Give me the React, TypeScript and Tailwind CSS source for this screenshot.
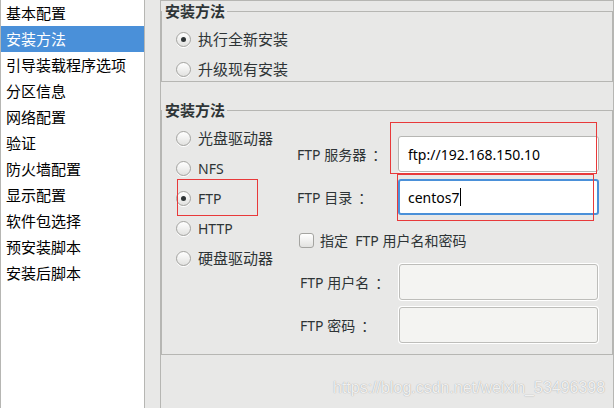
import React from "react";

const items = [
  "基本配置",
  "安装方法",
  "引导装载程序选项",
  "分区信息",
  "网络配置",
  "验证",
  "防火墙配置",
  "显示配置",
  "软件包选择",
  "预安装脚本",
  "安装后脚本",
];

const methods = [
  { label: "光盘驱动器", checked: false },
  { label: "NFS", checked: false },
  { label: "FTP", checked: true },
  { label: "HTTP", checked: false },
  { label: "硬盘驱动器", checked: false },
];

function Radio({ checked }: { checked?: boolean }) {
  return (
    <span className="w-[15px] h-[15px] shrink-0 rounded-full border border-[#a4a4a1] bg-gradient-to-b from-white to-[#e2e2e0] flex items-center justify-center shadow-[0_1px_0_#fff]">
      {checked && <span className="w-[5px] h-[5px] rounded-full bg-[#2e3436]" />}
    </span>
  );
}

function Entry({ value, focused, disabled }: { value?: string; focused?: boolean; disabled?: boolean }) {
  if (focused) {
    return (
      <div className="w-[201px] h-[36px] rounded-[3px] border-2 border-[#4a90d9] bg-white flex items-center px-[8px] text-[14px] text-black">
        <span>{value}</span>
        <span className="w-px h-[18px] bg-black" />
      </div>
    );
  }
  if (disabled) {
    return (
      <div className="w-[199px] h-[36px] ml-px rounded-[3px] border border-[#bdbdba] bg-[#f4f4f2] shadow-[0_0_0_1px_#fff]" />
    );
  }
  return (
    <div className="w-[201px] h-[36px] rounded-[3px] border border-[#b6b6b3] bg-white flex items-center px-[9px] text-[14px] text-black shadow-[0_1px_0_#fff]">
      {value}
    </div>
  );
}

// label with the wide-spaced colon GTK puts after it
function Label({ text, inset }: { text: string; inset?: boolean }) {
  return (
    <span className={inset ? "w-[101px] pl-[3px]" : "w-[101px]"}>
      {text}
      <span className="pl-[6px]">：</span>
    </span>
  );
}

export default function App() {
  return (
    <div
      className="relative w-[614px] h-[408px] flex bg-[#e8e8e7] overflow-hidden text-[#2e3436]"
      style={{ fontFamily: '"Noto Sans", "Noto Sans CJK SC", sans-serif' }}
    >
      {/* sidebar list */}
      <div className="w-[145px] h-full shrink-0 bg-white border-l border-r border-[#b6b6b3]">
        {items.map((it, i) => (
          <div
            key={it}
            className={
              i === 1
                ? "h-[26px] leading-[26px] pl-[5px] text-[15px] bg-[#4a90d9] text-white"
                : "h-[26px] leading-[26px] pl-[5px] text-[15px] text-black"
            }
          >
            {it}
          </div>
        ))}
      </div>

      {/* settings pane */}
      <div className="ml-[15px] w-[454px] h-full border-l border-t border-r border-[#b6b6b3]">
        <fieldset className="border border-[#b6b6b3]">
          <legend className="pl-[3px] pr-[2px] h-[20px] leading-[20px] text-[15px] font-bold text-[#2e3436]">
            安装方法
          </legend>
          <div className="pt-[6px] flex flex-col gap-[6px] pl-[14px]">
            <div className="h-[24px] flex items-center gap-[7px] text-[15px]">
              <Radio checked />
              <span>执行全新安装</span>
            </div>
            <div className="h-[24px] flex items-center gap-[7px] text-[15px]">
              <Radio />
              <span>升级现有安装</span>
            </div>
          </div>
        </fieldset>

        <fieldset className="mt-[18px] border border-[#b6b6b3]">
          <legend className="pl-[3px] pr-[2px] h-[20px] leading-[20px] text-[15px] font-bold text-[#2e3436]">
            安装方法
          </legend>
          <div className="flex">
            <div className="w-[135px] pl-[14px] pt-[6px] flex flex-col gap-[6px]">
              {methods.map((m) => (
                <div key={m.label} className="h-[24px] flex items-center gap-[7px] text-[15px]">
                  <Radio checked={m.checked} />
                  <span className={/^[A-Z]/.test(m.label) ? "text-[14px]" : ""}>{m.label}</span>
                </div>
              ))}
            </div>

            <div className="flex-1 pt-[16px] pb-[11px] text-[14px]">
              <div className="h-[36px] flex items-center">
                <Label text="FTP 服务器" />
                <Entry value="ftp://192.168.150.10" />
              </div>
              <div className="mt-[7px] h-[36px] flex items-center">
                <Label text="FTP 目录" />
                <Entry value="centos7" focused />
              </div>
              <div className="mt-[13px] h-[24px] flex items-center gap-[6px] pl-[2px]">
                <span className="w-[15px] h-[15px] rounded-[3px] border border-[#a4a4a1] bg-gradient-to-b from-white to-[#e2e2e0]" />
                <span className="whitespace-pre">指定  FTP 用户名和密码</span>
              </div>
              <div className="mt-[12px] h-[36px] flex items-center">
                <Label text="FTP 用户名" inset />
                <Entry disabled />
              </div>
              <div className="mt-[7px] h-[36px] flex items-center">
                <Label text="FTP 密码" inset />
                <Entry disabled />
              </div>
            </div>
          </div>
        </fieldset>
      </div>

      {/* red annotation boxes */}
      <div className="absolute left-[177px] top-[179px] w-[81px] h-[37px] border border-[#e8393a]" />
      <div className="absolute left-[390px] top-[122px] w-[207px] h-[52px] border border-[#e8393a]" />
      <div className="absolute left-[397px] top-[174px] w-[197px] h-[47px] border border-[#e8393a]" />

      {/* watermark */}
      <div
        className="absolute left-[333px] top-[378px] text-[16px] leading-[20px] text-white/85 [text-shadow:0_0_1px_rgba(0,0,0,0.4)]"
        style={{ fontFamily: '"Liberation Sans", sans-serif' }}
      >
        https://blog.csdn.net/weixin_53496398
      </div>
    </div>
  );
}
